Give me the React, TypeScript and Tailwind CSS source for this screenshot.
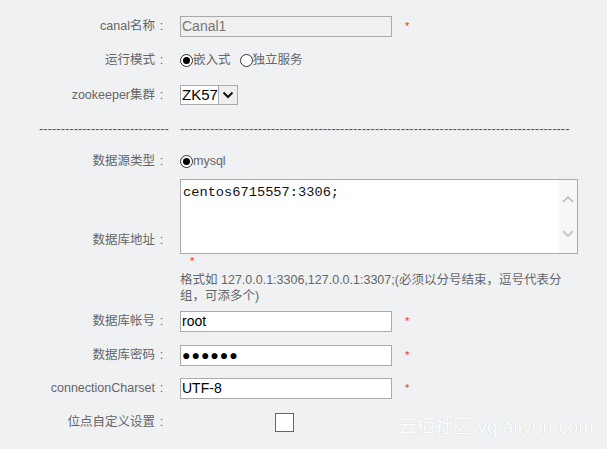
const labelCls = "w-[168px] shrink-0 text-right";

function Row({ label, h, children }: { label: string; h: string; children?: React.ReactNode }) {
  return (
    <div className={`flex items-center ${h}`}>
      <div className={labelCls}>
        {label}
        <span className="inline-block w-[13px] text-center">:</span>
      </div>
      <div className="ml-[12px] flex items-center">{children}</div>
    </div>
  );
}

function Star() {
  return <span className="ml-[13px] text-[11px] leading-none text-[#ff2b2b]">*</span>;
}

function Radio({ on }: { on?: boolean }) {
  return (
    <span className="flex h-[13px] w-[13px] items-center justify-center rounded-full border border-[#333] bg-white">
      {on && <span className="h-[7px] w-[7px] rounded-full bg-black" />}
    </span>
  );
}

function TextInput({ value, dim, mono }: { value: string; dim?: boolean; mono?: boolean }) {
  return (
    <div
      className={`flex h-[21px] w-[212px] items-center border border-[#aaa] px-[1px] text-[14px] ${
        dim ? "bg-[#f0f0f0] text-[#777]" : "bg-white text-black"
      } ${mono ? "tracking-[1px]" : ""}`}
    >
      {value}
    </div>
  );
}

export default function App() {
  return (
    <div className="relative h-[449px] w-[607px] overflow-hidden bg-[#f0f1f3] font-['Liberation_Sans','Noto_Sans_CJK_SC',sans-serif] text-[12.5px] text-[#666]">
      <div className="pt-[9px]">
        <Row label="canal名称" h="h-[34px]">
          <TextInput value="Canal1" dim />
          <Star />
        </Row>
        <Row label="运行模式" h="h-[35px]">
          <Radio on />
          <span className="mr-[9px]">嵌入式</span>
          <Radio />
          <span>独立服务</span>
        </Row>
        <Row label="zookeeper集群" h="h-[34px]">
          <div className="flex h-[20px] border border-[#aaa] bg-white">
            <span className="w-[37px] pl-[1px] text-[15px] leading-[18px] text-black">ZK57</span>
            <span className="flex w-[19px] items-center justify-center border-l border-[#aaa] bg-[#eee]">
              <svg width="12" height="8" viewBox="0 0 12 8" fill="none" stroke="#111" strokeWidth="2">
                <path d="M1.5 1.5 6 6l4.5-4.5" />
              </svg>
            </span>
          </div>
        </Row>
        <div className="flex h-[33px] items-center text-[13px] text-[#556]">
          <div className="ml-[39px] whitespace-nowrap leading-none">{"-".repeat(30)}</div>
          <div className="ml-[11px] whitespace-nowrap leading-none">{"-".repeat(90)}</div>
        </div>
        <Row label="数据源类型" h="h-[32px]">
          <Radio on />
          <span>mysql</span>
        </Row>
        <div className="flex h-[127px] items-center">
          <div className={labelCls}>
            数据库地址
            <span className="inline-block w-[13px] text-center">:</span>
          </div>
          <div className="ml-[12px] flex h-full w-[400px] flex-col pt-[2px]">
            <div className="flex h-[81px] w-[398px] border border-[#aaa] bg-white">
              <div className="flex-1 px-[2px] pt-[5px] font-['Liberation_Mono',monospace] text-[13.7px] leading-[16px] text-[#111]">
                centos6715557:3306;
              </div>
              <div className="flex w-[18px] flex-col items-center justify-between bg-[#f7f7f7] py-[15px]">
                <svg width="12" height="8" viewBox="0 0 12 8" fill="none" stroke="#c4c4c4" strokeWidth="1.8">
                  <path d="M1 7 6 2l5 5" />
                </svg>
                <svg width="12" height="8" viewBox="0 0 12 8" fill="none" stroke="#c4c4c4" strokeWidth="1.8">
                  <path d="M1 1l5 5 5-5" />
                </svg>
              </div>
            </div>
            <div className="ml-[10px] h-[14px] text-[11px] leading-[14px] text-[#ff2b2b]">*</div>
            <div className="mt-[4px] leading-[16px]">
              格式如 127.0.0.1:3306,127.0.0.1:3307;(必须以分号结束，逗号代表分
              <br />
              组，可添多个)
            </div>
          </div>
        </div>
        <Row label="数据库帐号" h="h-[34px]">
          <TextInput value="root" />
          <Star />
        </Row>
        <Row label="数据库密码" h="h-[34px]">
          <TextInput value="●●●●●●" mono />
          <Star />
        </Row>
        <Row label="connectionCharset" h="h-[33px]">
          <TextInput value="UTF-8" />
          <Star />
        </Row>
        <Row label="位点自定义设置" h="h-[34px]">
          <span className="ml-[95px] h-[19px] w-[19px] border border-[#666] bg-white" />
        </Row>
      </div>
      <div className="absolute left-[398px] top-[414px] text-[18px] tracking-[0.5px] text-white [text-shadow:0_0_1px_rgba(0,0,0,0.18)]">
        云栖社区 yq.aliyun.com
      </div>
    </div>
  );
}
